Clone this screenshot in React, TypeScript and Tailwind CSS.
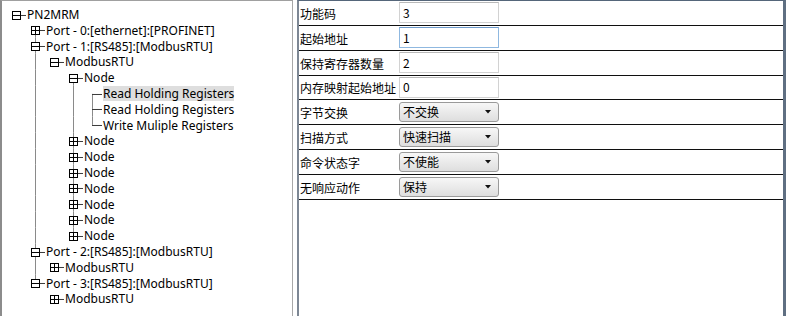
import React from "react";

type Kind = "minus" | "plus" | "leaf";
interface Row {
  level: number;
  kind: Kind;
  label: string;
  up: boolean;
  down: boolean;
  guides: boolean[];
  selected?: boolean;
}

const rows: Row[] = [
  { level: 0, kind: "minus", label: "PN2MRM", up: false, down: false, guides: [] },
  { level: 1, kind: "plus", label: "Port - 0:[ethernet]:[PROFINET]", up: false, down: true, guides: [false] },
  { level: 1, kind: "minus", label: "Port - 1:[RS485]:[ModbusRTU]", up: true, down: true, guides: [false] },
  { level: 2, kind: "minus", label: "ModbusRTU", up: false, down: false, guides: [false, true] },
  { level: 3, kind: "minus", label: "Node", up: false, down: true, guides: [false, true, false] },
  { level: 4, kind: "leaf", label: "Read Holding Registers", up: false, down: true, guides: [false, true, false, true], selected: true },
  { level: 4, kind: "leaf", label: "Read Holding Registers", up: true, down: true, guides: [false, true, false, true] },
  { level: 4, kind: "leaf", label: "Write Muliple Registers", up: true, down: false, guides: [false, true, false, true] },
  { level: 3, kind: "plus", label: "Node", up: true, down: true, guides: [false, true, false] },
  { level: 3, kind: "plus", label: "Node", up: true, down: true, guides: [false, true, false] },
  { level: 3, kind: "plus", label: "Node", up: true, down: true, guides: [false, true, false] },
  { level: 3, kind: "plus", label: "Node", up: true, down: true, guides: [false, true, false] },
  { level: 3, kind: "plus", label: "Node", up: true, down: true, guides: [false, true, false] },
  { level: 3, kind: "plus", label: "Node", up: true, down: true, guides: [false, true, false] },
  { level: 3, kind: "plus", label: "Node", up: true, down: false, guides: [false, true, false] },
  { level: 1, kind: "minus", label: "Port - 2:[RS485]:[ModbusRTU]", up: true, down: true, guides: [false] },
  { level: 2, kind: "plus", label: "ModbusRTU", up: false, down: false, guides: [false, true] },
  { level: 1, kind: "minus", label: "Port - 3:[RS485]:[ModbusRTU]", up: true, down: false, guides: [false] },
  { level: 2, kind: "plus", label: "ModbusRTU", up: false, down: false, guides: [false, false] },
];

function GuideCell({ on }: { on: boolean }) {
  return (
    <svg width="19" height="15.8" viewBox="0 0 19 15.8" className="shrink-0 block">
      {on && <line x1="8.5" y1="0" x2="8.5" y2="15.8" stroke="#8a8a8a" strokeWidth="1" />}
    </svg>
  );
}

function NodeCell({ row }: { row: Row }) {
  const c = 7.9;
  return (
    <svg width="19" height="15.8" viewBox="0 0 19 15.8" className="shrink-0 block">
      {row.up && <line x1="8.5" y1="0" x2="8.5" y2={c} stroke="#8a8a8a" strokeWidth="1" />}
      {row.down && <line x1="8.5" y1={c} x2="8.5" y2="15.8" stroke="#8a8a8a" strokeWidth="1" />}
      {row.kind === "leaf" ? (
        <line x1="8" y1="8.5" x2="18" y2="8.5" stroke="#3a3a3a" strokeWidth="1" />
      ) : (
        <g>
          <line x1="13" y1="8.5" x2="18" y2="8.5" stroke="#3a3a3a" strokeWidth="1" />
          <rect x="4.5" y="4.5" width="8" height="8" fill="#fff" stroke="#000" strokeWidth="1" />
          <line x1="4.5" y1="8.5" x2="12.5" y2="8.5" stroke="#000" strokeWidth="1" />
          {row.kind === "plus" && <line x1="8.5" y1="4.5" x2="8.5" y2="12.5" stroke="#000" strokeWidth="1" />}
        </g>
      )}
    </svg>
  );
}

function Tree() {
  return (
    <div className="flex flex-col pt-[5.6px] pl-[6px]">
      {rows.map((r, i) => (
        <div key={i} className="flex h-[15.8px] items-center">
          {r.guides.map((g, j) => (
            <GuideCell key={j} on={g} />
          ))}
          <NodeCell row={r} />
          <span
            className={
              "text-[12px] leading-[15px] whitespace-nowrap text-black " +
              (r.selected ? "bg-[#dedede]" : "")
            }
          >
            {r.label}
          </span>
        </div>
      ))}
    </div>
  );
}

function TextInput({ value, focused }: { value: string; focused?: boolean }) {
  return (
    <div
      className={
        "w-[100px] h-[21px] border bg-white flex items-center pl-[3px] text-[12px] " +
        (focused ? "border-[#8fb8e0] border-t-[#6d9acb]" : "border-[#d2d2d2] border-t-[#b9b9b9]")
      }
    >
      {value}
    </div>
  );
}

function Select({ value }: { value: string }) {
  return (
    <div className="w-[100px] h-[20px] border border-[#9a9a9a] rounded-[3px] bg-gradient-to-b from-[#f7f7f7] to-[#dedede] flex items-center justify-between pl-[3px] pr-[7px] text-[12px]">
      <span>{value}</span>
      <svg width="6" height="4" viewBox="0 0 6 4">
        <polygon points="0,0 6,0 3,3.5" fill="#111" />
      </svg>
    </div>
  );
}

const props: { label: string; type: "input" | "select"; value: string; focused?: boolean }[] = [
  { label: "功能码", type: "input", value: "3" },
  { label: "起始地址", type: "input", value: "1", focused: true },
  { label: "保持寄存器数量", type: "input", value: "2" },
  { label: "内存映射起始地址", type: "input", value: "0" },
  { label: "字节交换", type: "select", value: "不交换" },
  { label: "扫描方式", type: "select", value: "快速扫描" },
  { label: "命令状态字", type: "select", value: "不使能" },
  { label: "无响应动作", type: "select", value: "保持" },
];

export default function App() {
  return (
    <div
      className="flex w-[787px] h-[316px] bg-white text-black overflow-hidden"
      style={{ fontFamily: '"Noto Sans", "Noto Sans CJK SC", sans-serif' }}
    >
      <div className="w-[293px] h-full shrink-0 border-l-2 border-l-[#8c8c8c] border-t border-t-[#a0a0a0] border-r border-r-[#a8a8a8] bg-white">
        <Tree />
      </div>
      <div className="w-[4px] shrink-0 bg-white" />
      <div className="w-[489px] h-full shrink-0 border-l-2 border-l-[#7d8794] border-t border-t-[#55667a] border-r-[3px] border-r-[#5f6f82] bg-white flex flex-col">
        {props.map((p, i) => (
          <div
            key={i}
            className="flex items-center h-[24.85px] border-b border-b-[#101010] shrink-0"
          >
            <div className="w-[100px] pl-[1px] text-[12px] whitespace-nowrap leading-none pt-[2px]" style={{ fontFamily: '"Noto Sans CJK SC", sans-serif' }}>
              {p.label}
            </div>
            <div style={{ fontFamily: '"Noto Sans CJK SC", sans-serif' }}>
              {p.type === "input" ? (
                <TextInput value={p.value} focused={p.focused} />
              ) : (
                <Select value={p.value} />
              )}
            </div>
          </div>
        ))}
      </div>
    </div>
  );
}
